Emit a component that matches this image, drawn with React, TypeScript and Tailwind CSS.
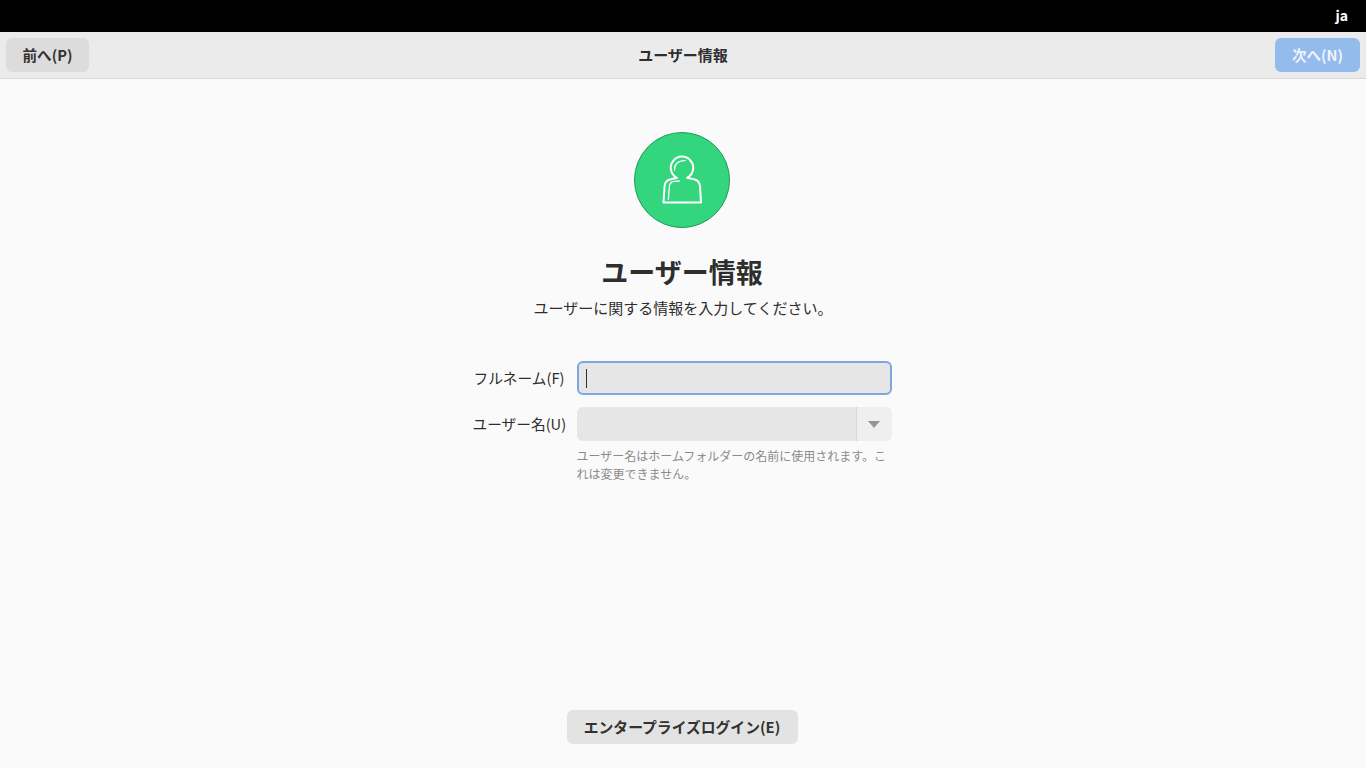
export default function App() {
  return (
    <div className="flex h-[768px] w-[1366px] flex-col overflow-hidden bg-[#fafafa] font-['Noto_Sans_CJK_JP','Noto_Sans',sans-serif] text-[#2e3436]">
      <div className="flex h-8 shrink-0 items-center justify-end bg-black pr-[18px] pb-[1px] text-[14px] font-bold text-white">ja</div>
      <header className="flex h-[47px] shrink-0 items-center justify-between border-b border-[#d8d8d8] bg-[#ebebeb] px-[6px]">
        <button className="h-[34px] w-[83px] rounded-[6px] bg-[#dcdcdc] text-[14.6px] font-bold text-[#323232]">前へ(P)</button>
        <div className="ml-[2px] text-[15px] font-bold text-[#2e2e2e]">ユーザー情報</div>
        <button className="h-[34px] w-[85px] rounded-[6px] bg-[#93bbec] text-[14.6px] font-bold text-[#edf3fb]">次へ(N)</button>
      </header>
      <main className="flex flex-1 flex-col items-center pt-[53px]">
        <div className="mr-[2px] flex h-[96px] w-[96px] items-center justify-center rounded-full border border-[#1f9d5f] bg-[#33d57d]">
          <svg width="94" height="94" viewBox="1 1 94 94" fill="none" stroke="white" strokeWidth="2" strokeLinejoin="round" strokeLinecap="round">
            <path d="M29.5 70.5 L30.6 54 C31 50 33 47.8 37 47.2 L43 45.8 A11.2 11.2 0 1 1 53 45.8 L60 47.2 C63.5 48 65.5 50 66 54 L67 70.5 Z" />
            <path d="M34.4 67.3 L35.3 55 C35.6 51.5 37.5 49.7 40 49.4 L45.3 49" strokeWidth="1.3" />
            <path d="M40.5 38 C40 32.5 44 28.6 51 28.7" strokeWidth="1.3" />
          </svg>
        </div>
        <h1 className="mt-[22px] mr-[2px] text-[27px] leading-[44px] font-bold text-[#2e2e2e]">ユーザー情報</h1>
        <p className="mt-[1px] text-[15px] leading-[26px] text-[#2e2e2e]">ユーザーに関する情報を入力してください。</p>
        <div className="mt-[40px] mr-[2px] grid grid-cols-[92px_315px] items-center gap-x-[12px] gap-y-[12px] text-[#2e2e2e]">
          <label className="text-right text-[14.7px] whitespace-nowrap">フルネーム(F)</label>
          <div className="flex h-[34px] items-center rounded-[6px] border-2 border-[#7ba8e0] bg-[#e6e6e6] pl-[7px]">
            <span className="h-[19px] w-px bg-[#2e2e2e]" />
          </div>
          <label className="text-right text-[14.7px] whitespace-nowrap">ユーザー名(U)</label>
          <div className="flex h-[34px] overflow-hidden rounded-[6px] bg-[#e6e6e6]">
            <div className="flex-1" />
            <div className="flex w-[36px] items-center justify-center border-l border-[#d6d6d6] bg-[#efefef]">
              <svg width="12" height="7" viewBox="0 0 12 7"><path d="M0 0H12L6 7Z" fill="#959595" /></svg>
            </div>
          </div>
          <div />
          <p className="mt-[-6px] text-[12px] leading-[18px] text-[#8a8a8a]">ユーザー名はホームフォルダーの名前に使用されます。これは変更できません。</p>
        </div>
        <div className="flex-1" />
        <button className="mr-[2px] mb-[24px] h-[34px] w-[231px] rounded-[6px] bg-[#e3e3e3] text-[14.8px] font-bold text-[#323232]">エンタープライズログイン(E)</button>
      </main>
    </div>
  );
}
